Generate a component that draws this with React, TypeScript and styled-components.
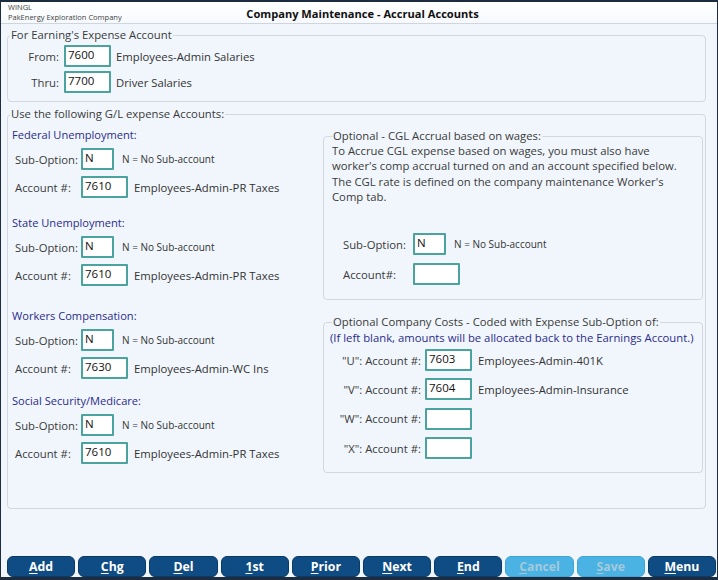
import React from 'react';
import styled, { createGlobalStyle } from 'styled-components';

const Global = createGlobalStyle`
  html, body { margin: 0; padding: 0; background: #f0f6fc; }
  * { box-sizing: border-box; }
`;

const FONT = `"Open Sans", "Noto Sans", "Liberation Sans", sans-serif`;

const Window = styled.div`
  width: 718px;
  height: 580px;
  display: flex;
  flex-direction: column;
  background: #f0f6fc;
  border: 1px solid #1d2c3e;
  border-top-width: 2px;
  border-bottom-width: 3px;
  font-family: ${FONT};
  font-size: 11.3px;
  color: #2e2e2e;
`;

const Header = styled.div`
  height: 22px;
  flex: none;
  display: grid;
  grid-template-columns: 1fr auto 1fr;
  align-items: center;
  background: linear-gradient(#ffffff, #f6f9fc);
  border-bottom: 1px solid #cdd5dd;
  padding-left: 7px;
`;

const Brand = styled.div`
  display: flex;
  flex-direction: column;
  font-size: 7.5px;
  line-height: 10px;
  color: #444;
  align-self: start;
`;

const Title = styled.div`
  font-weight: 700;
  font-size: 11.1px;
  color: #111;
  padding-top: 1px;
`;

const Content = styled.div`
  flex: 1;
  display: flex;
  flex-direction: column;
  padding: 3px 11px 0 6px;
`;

const Group = styled.fieldset<{ $mt?: number; $px?: number; $pb?: number }>`
  margin: ${(p) => p.$mt ?? 0}px 0 0 0;
  padding: 0 ${(p) => p.$px ?? 0}px ${(p) => p.$pb ?? 0}px;
  border: 1px solid #d2d8de;
  border-radius: 4px;
  min-width: 0;
`;

const Legend = styled.legend<{ $ml?: number }>`
  margin-left: ${(p) => p.$ml ?? 0}px;
  padding: 0 1px;
  font-size: 11.3px;
  line-height: 16px;
  color: #3a3a3a;
`;

const Stack = styled.div<{ $gap: number; $pt?: number; $pb?: number }>`
  display: flex;
  flex-direction: column;
  gap: ${(p) => p.$gap}px;
  padding-top: ${(p) => p.$pt ?? 0}px;
  padding-bottom: ${(p) => p.$pb ?? 0}px;
`;

const Row = styled.div<{ $indent?: number }>`
  display: flex;
  align-items: center;
  height: 22px;
  padding-left: ${(p) => p.$indent ?? 0}px;
`;

const Label = styled.span<{ $w: number; $right?: boolean }>`
  width: ${(p) => p.$w}px;
  flex: none;
  text-align: ${(p) => (p.$right ? 'right' : 'left')};
  color: #3a3a3a;
  white-space: nowrap;
`;

const Field = styled.div<{ $w: number; $ml?: number }>`
  width: ${(p) => p.$w}px;
  height: 22px;
  flex: none;
  margin-left: ${(p) => p.$ml ?? 0}px;
  background: #ffffff;
  border: 2px solid #4ba39f;
  border-radius: 1px;
  padding: 0 2px;
  font-size: 11.5px;
  line-height: 16px;
  color: #111;
`;

const Desc = styled.span<{ $ml: number }>`
  margin-left: ${(p) => p.$ml}px;
  color: #333;
  white-space: nowrap;
`;

const Hint = styled.span`
  margin-left: 8px;
  font-size: 10px;
  color: #333;
  white-space: nowrap;
`;

const Columns = styled.div`
  display: grid;
  grid-template-columns: 315px 1fr;
  padding: 5px 6px 35px 0;
`;

const LeftCol = styled.div`
  display: flex;
  flex-direction: column;
`;

const Section = styled.div<{ $mt: number }>`
  margin-top: ${(p) => p.$mt}px;
  display: flex;
  flex-direction: column;
  gap: 6px;
`;

const Heading = styled.div`
  padding-left: 4px;
  line-height: 16px;
  margin-bottom: -1px;
  font-size: 11.1px;
  color: #2b2b8c;
`;

const RightCol = styled.div`
  display: flex;
  flex-direction: column;
  padding-top: 1px;
`;

const Note = styled.p`
  margin: -1px 0 0 0;
  line-height: 15.3px;
  color: #3a3a3a;
`;

const BlueNote = styled.div`
  margin-left: -2px;
  line-height: 16px;
  color: #2b2b8c;
  white-space: nowrap;
`;

const ButtonBar = styled.div`
  flex: none;
  display: flex;
  gap: 3px;
  padding: 0 1px 0 6px;
`;

const Btn = styled.button<{ $disabled?: boolean }>`
  flex: 1;
  height: 21px;
  margin: 0;
  padding: 0;
  border: 1px solid ${(p) => (p.$disabled ? '#3ea4d6' : '#0a3a66')};
  border-radius: 6px;
  background: ${(p) => (p.$disabled ? '#4bb3e3' : '#0f4c83')};
  color: ${(p) => (p.$disabled ? '#a3c9dc' : '#ffffff')};
  font-family: ${FONT};
  font-weight: 700;
  font-size: 12.3px;
  line-height: 19px;
  cursor: pointer;
  u { text-decoration-thickness: 1px; text-underline-offset: 2px; }
`;

const Spacer = styled.div`
  flex: 1;
`;

type Sec = { title: string; acct: string; desc: string; mt: number };

const sections: Sec[] = [
  { title: 'Federal Unemployment:', acct: '7610', desc: 'Employees-Admin-PR Taxes', mt: 0 },
  { title: 'State Unemployment:', acct: '7610', desc: 'Employees-Admin-PR Taxes', mt: 17 },
  { title: 'Workers Compensation:', acct: '7630', desc: 'Employees-Admin-WC Ins', mt: 22 },
  { title: 'Social Security/Medicare:', acct: '7610', desc: 'Employees-Admin-PR Taxes', mt: 14 },
];

const costs = [
  { code: 'U', acct: '7603', desc: 'Employees-Admin-401K' },
  { code: 'V', acct: '7604', desc: 'Employees-Admin-Insurance' },
  { code: 'W', acct: '', desc: '' },
  { code: 'X', acct: '', desc: '' },
];

const buttons = [
  { k: 'A', rest: 'dd' },
  { k: 'C', rest: 'hg' },
  { k: 'D', rest: 'el' },
  { k: '1', rest: 'st' },
  { k: 'P', rest: 'rior' },
  { k: 'N', rest: 'ext' },
  { k: 'E', rest: 'nd' },
  { k: 'C', rest: 'ancel', disabled: true },
  { k: 'S', rest: 'ave', disabled: true },
  { k: 'M', rest: 'enu' },
];

export default function App() {
  return (
    <>
      <Global />
      <Window>
        <Header>
          <Brand>
            <span>WINGL</span>
            <span>PakEnergy Exploration Company</span>
          </Brand>
          <Title>Company Maintenance - Accrual Accounts</Title>
          <span />
        </Header>
        <Content>
          <Group>
            <Legend $ml={2}>For Earning's Expense Account</Legend>
            <Stack $gap={4} $pt={2} $pb={8}>
              <Row>
                <Label $w={51} $right>From:</Label>
                <Field $w={47} $ml={5}>7600</Field>
                <Desc $ml={5}>Employees-Admin Salaries</Desc>
              </Row>
              <Row>
                <Label $w={51} $right>Thru:</Label>
                <Field $w={47} $ml={5}>7700</Field>
                <Desc $ml={5}>Driver Salaries</Desc>
              </Row>
            </Stack>
          </Group>

          <Group $mt={4}>
            <Legend $ml={2}>Use the following G/L expense Accounts:</Legend>
            <Columns>
              <LeftCol>
                {sections.map((s) => (
                  <Section key={s.title} $mt={s.mt}>
                    <Heading>{s.title}</Heading>
                    <Row $indent={7}>
                      <Label $w={66}>Sub-Option:</Label>
                      <Field $w={33}>N</Field>
                      <Hint>N = No Sub-account</Hint>
                    </Row>
                    <Row $indent={7}>
                      <Label $w={66}>Account #:</Label>
                      <Field $w={47}>{s.acct}</Field>
                      <Desc $ml={6}>{s.desc}</Desc>
                    </Row>
                  </Section>
                ))}
              </LeftCol>

              <RightCol>
                <Group $px={8} $pb={14}>
                  <Legend>Optional - CGL Accrual based on wages:</Legend>
                  <Note>
                    To Accrue CGL expense based on wages, you must also have worker's comp accrual turned on and an
                    account specified below. The CGL rate is defined on the company maintenance Worker's Comp tab.
                  </Note>
                  <Stack $gap={8} $pt={29}>
                    <Row $indent={11}>
                      <Label $w={70}>Sub-Option:</Label>
                      <Field $w={33}>N</Field>
                      <Hint>N = No Sub-account</Hint>
                    </Row>
                    <Row $indent={11}>
                      <Label $w={70}>Account#:</Label>
                      <Field $w={47} />
                    </Row>
                  </Stack>
                </Group>

                <Group $mt={14} $px={8} $pb={13}>
                  <Legend>Optional Company Costs - Coded with Expense Sub-Option of:</Legend>
                  <BlueNote>(If left blank, amounts will be allocated back to the Earnings Account.)</BlueNote>
                  <Stack $gap={7.3} $pt={3}>
                    {costs.map((c) => (
                      <Row key={c.code}>
                        <Label $w={89} $right>"{c.code}": Account #:</Label>
                        <Field $w={47} $ml={4}>{c.acct}</Field>
                        {c.desc && <Desc $ml={6}>{c.desc}</Desc>}
                      </Row>
                    ))}
                  </Stack>
                </Group>
              </RightCol>
            </Columns>
          </Group>
          <Spacer />
        </Content>
        <ButtonBar>
          {buttons.map((b) => (
            <Btn key={b.k + b.rest} $disabled={b.disabled}>
              <u>{b.k}</u>
              {b.rest}
            </Btn>
          ))}
        </ButtonBar>
      </Window>
    </>
  );
}
